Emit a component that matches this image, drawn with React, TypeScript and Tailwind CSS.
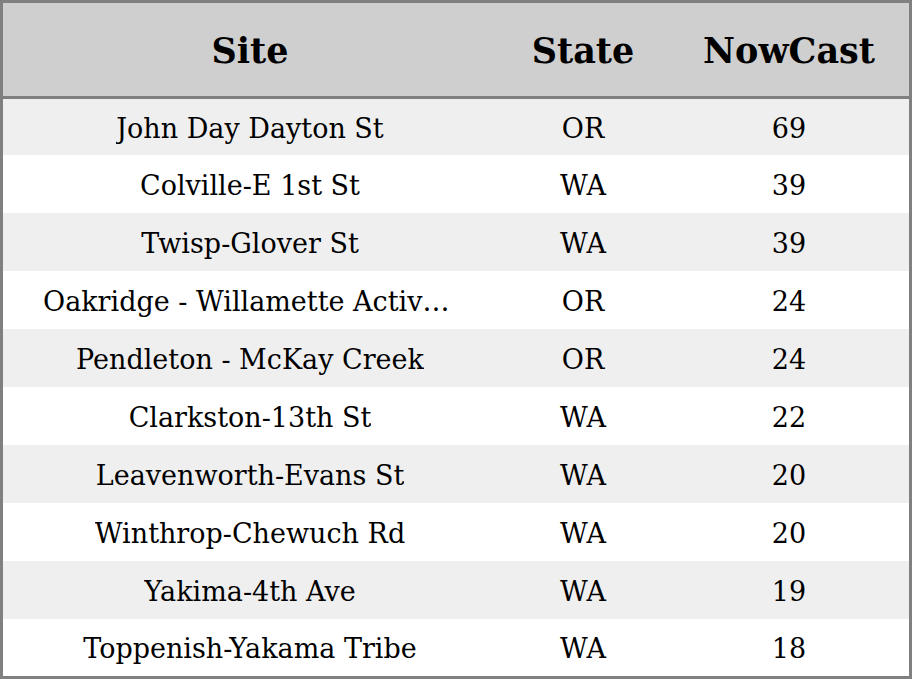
const rows = [
  { site: 'John Day Dayton St', state: 'OR', nowcast: 69 },
  { site: 'Colville-E 1st St', state: 'WA', nowcast: 39 },
  { site: 'Twisp-Glover St', state: 'WA', nowcast: 39 },
  { site: 'Oakridge - Willamette Activity Center', state: 'OR', nowcast: 24 },
  { site: 'Pendleton - McKay Creek', state: 'OR', nowcast: 24 },
  { site: 'Clarkston-13th St', state: 'WA', nowcast: 22 },
  { site: 'Leavenworth-Evans St', state: 'WA', nowcast: 20 },
  { site: 'Winthrop-Chewuch Rd', state: 'WA', nowcast: 20 },
  { site: 'Yakima-4th Ave', state: 'WA', nowcast: 19 },
  { site: 'Toppenish-Yakama Tribe', state: 'WA', nowcast: 18 },
];

export default function App() {
  return (
    <div className="w-[912px] h-[679px] bg-white font-['DejaVu_Serif',serif] text-black">
      <div className="border-[3px] border-[#808080] flex flex-col">
        {/* Header */}
        <div className="grid grid-cols-[494px_172px_240px] h-[96px] bg-[#cfcfcf] border-b-[3px] border-[#808080] text-[35px] font-bold">
          <div className="flex items-center justify-center pt-[3px]">Site</div>
          <div className="flex items-center justify-center pt-[3px]">State</div>
          <div className="flex items-center justify-center pt-[3px]">NowCast</div>
        </div>

        {/* Rows */}
        {rows.map((r, i) => (
          <div
            key={i}
            className={
              'grid grid-cols-[494px_172px_240px] text-[27px] ' +
              (i % 2 === 0 ? 'bg-[#efefef] ' : 'bg-white ') +
              (i === 0 ? 'h-[56px]' : i === rows.length - 1 ? 'h-[57px]' : 'h-[58px]')
            }
          >
            <div className="flex items-center justify-center px-10 pt-[4px] min-w-0">
              <span className="truncate">{r.site}</span>
            </div>
            <div className="flex items-center justify-center pt-[4px]">{r.state}</div>
            <div className="flex items-center justify-center pt-[4px]">{r.nowcast}</div>
          </div>
        ))}
      </div>
    </div>
  );
}
